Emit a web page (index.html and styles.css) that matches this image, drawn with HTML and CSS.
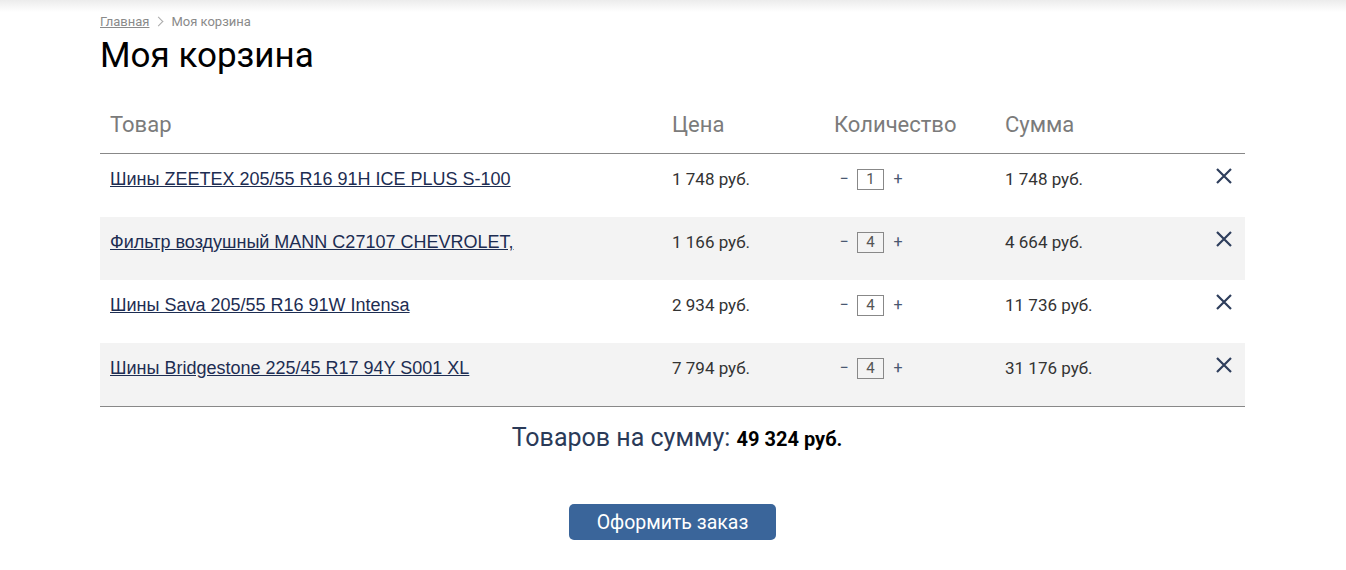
FILE: index.html
```html
<!DOCTYPE html>
<html lang="ru">
<head>
  <meta charset="UTF-8" />
  <title>Моя корзина</title>
  <link rel="stylesheet" href="styles.css">
</head>
<body>
  <div class="top-shadow"></div>

  <main class="page">
    <div class="breadcrumbs">
      <a href="#">Главная</a>
      <span class="sep"></span>
      <span>Моя корзина</span>
    </div>

    <h1>Моя корзина</h1>

    <div class="cart">
      <div class="cart-row cart-head">
        <div class="cell">Товар</div>
        <div class="cell">Цена</div>
        <div class="cell">Количество</div>
        <div class="cell">Сумма</div>
        <div class="cell"></div>
      </div>

      <div class="cart-row">
        <div class="cell"><a class="product" href="#">Шины ZEETEX 205/55 R16 91H ICE PLUS S-100</a></div>
        <div class="cell">1 748 руб.</div>
        <div class="cell qty"><span class="qty-btn">−</span><span class="qty-val">1</span><span class="qty-btn">+</span></div>
        <div class="cell">1 748 руб.</div>
        <div class="cell remove"><svg viewBox="0 0 16 16" width="16" height="16"><path d="M1 1L15 15M15 1L1 15" /></svg></div>
      </div>

      <div class="cart-row">
        <div class="cell"><a class="product" href="#">Фильтр воздушный MANN C27107 CHEVROLET,</a></div>
        <div class="cell">1 166 руб.</div>
        <div class="cell qty"><span class="qty-btn">−</span><span class="qty-val">4</span><span class="qty-btn">+</span></div>
        <div class="cell">4 664 руб.</div>
        <div class="cell remove"><svg viewBox="0 0 16 16" width="16" height="16"><path d="M1 1L15 15M15 1L1 15" /></svg></div>
      </div>

      <div class="cart-row">
        <div class="cell"><a class="product" href="#">Шины Sava 205/55 R16 91W Intensa</a></div>
        <div class="cell">2 934 руб.</div>
        <div class="cell qty"><span class="qty-btn">−</span><span class="qty-val">4</span><span class="qty-btn">+</span></div>
        <div class="cell">11 736 руб.</div>
        <div class="cell remove"><svg viewBox="0 0 16 16" width="16" height="16"><path d="M1 1L15 15M15 1L1 15" /></svg></div>
      </div>

      <div class="cart-row">
        <div class="cell"><a class="product" href="#">Шины Bridgestone 225/45 R17 94Y S001 XL</a></div>
        <div class="cell">7 794 руб.</div>
        <div class="cell qty"><span class="qty-btn">−</span><span class="qty-val">4</span><span class="qty-btn">+</span></div>
        <div class="cell">31 176 руб.</div>
        <div class="cell remove"><svg viewBox="0 0 16 16" width="16" height="16"><path d="M1 1L15 15M15 1L1 15" /></svg></div>
      </div>
    </div>

    <div class="total">Товаров на сумму: <b>49 324 руб.</b></div>

    <div class="actions">
      <button class="checkout">Оформить заказ</button>
    </div>
  </main>
</body>
</html>
```

FILE: styles.css
```css
* {
  box-sizing: border-box;
  margin: 0;
  padding: 0;
}

body {
  font-family: Roboto, 'Liberation Sans', Arial, sans-serif;
  background: #fff;
  color: #333;
}

.top-shadow {
  height: 12px;
  background: linear-gradient(to bottom, #ececec, #fff);
}

.page {
  width: 1145px;
  margin-left: 100px;
}

/* Хлебные крошки */
.breadcrumbs {
  display: flex;
  align-items: center;
  font-size: 13px;
  color: #8a8a8a;
  height: 18px;
}

.breadcrumbs a {
  color: #8a8a8a;
}

.breadcrumbs .sep {
  width: 7px;
  height: 7px;
  border-top: 1px solid #aaa;
  border-right: 1px solid #aaa;
  transform: rotate(45deg);
  margin: 0 9px 0 6px;
}

h1 {
  font-size: 35px;
  font-weight: 400;
  color: #000;
  margin-top: 6px;
  line-height: 40px;
}

.cart {
  margin-top: 25px;
  border-bottom: 1px solid #888;
}

.cart-row {
  display: grid;
  grid-template-columns: 562px 162px 171px 1fr 50px;
  height: 63px;
  font-size: 17px;
  color: #333;
}

.cart-row:nth-child(odd):not(.cart-head) {
  background: #f3f3f3;
}

.cart-row .cell {
  padding: 14px 10px 0;
  line-height: 22px;
}

.cart-head {
  height: 53px;
  border-bottom: 1px solid #888;
  font-size: 22px;
  color: #7b7b7b;
}

.cart-head .cell {
  padding-top: 10px;
  line-height: 28px;
}

.product {
  font-family: 'Liberation Sans', Arial, sans-serif;
  font-size: 18px;
  color: #1d2d52;
}

.qty {
  display: flex;
  align-items: flex-start;
  color: #555;
}

.qty-btn {
  width: 20px;
  text-align: center;
  font-size: 16px;
  color: #4a5870;
}

.qty-val {
  width: 27px;
  height: 21px;
  border: 1px solid #888;
  text-align: center;
  font-size: 15px;
  line-height: 19px;
  color: #555;
  margin: 1px 4px 0 3px;
}

.remove {
  display: flex;
  justify-content: flex-end;
}

.remove svg {
  margin-right: 3px;
  margin-top: 0;
  stroke: #2e3e5c;
  stroke-width: 2.2;
  fill: none;
}

.total {
  text-align: center;
  font-size: 25px;
  color: #2a3a58;
  margin-top: 16px;
  padding-left: 9px;
  line-height: 30px;
}

.total b {
  font-size: 20px;
  color: #000;
}

.actions {
  display: flex;
  justify-content: center;
  margin-top: 50px;
}

.checkout {
  width: 207px;
  height: 36px;
  border: none;
  border-radius: 5px;
  background: #3a659a;
  color: #fff;
  font-family: Roboto, sans-serif;
  font-size: 19.5px;
  cursor: pointer;
}
```
